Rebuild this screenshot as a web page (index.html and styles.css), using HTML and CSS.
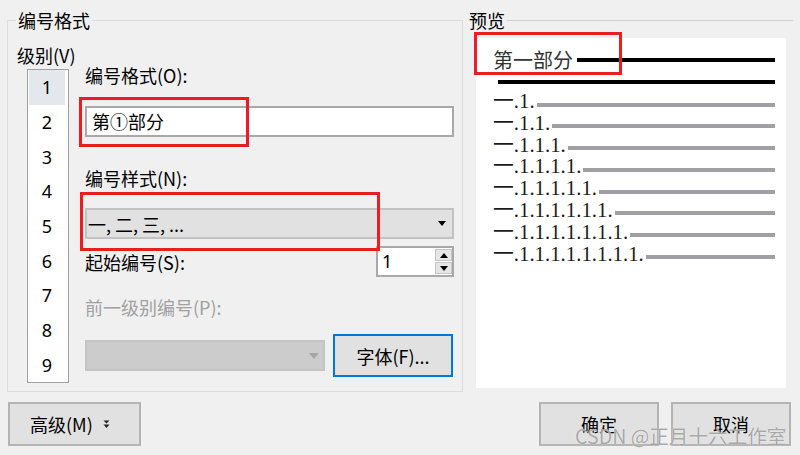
FILE: index.html
```html
<!DOCTYPE html>
<html lang="zh-CN">
<head>
  <meta charset="UTF-8">
  <meta name="viewport" content="width=device-width, initial-scale=1.0">
  <title>编号格式</title>
  <link rel="stylesheet" href="styles.css">
</head>
<body>

  <div class="dialog-top">
    <div class="group">
      <div class="group-title">编号格式</div>
      <div class="group-body">

        <div class="levels">
          <div class="levels-label">级别(V)</div>
          <ul class="level-list">
            <li class="selected">1</li>
            <li>2</li>
            <li>3</li>
            <li>4</li>
            <li>5</li>
            <li>6</li>
            <li>7</li>
            <li>8</li>
            <li>9</li>
          </ul>
        </div>

        <div class="fields">
          <div class="field-label first">编号格式(O):</div>
          <div class="text-input">第①部分</div>

          <div class="field-label">编号样式(N):</div>
          <div class="select">
            <span>一, 二, 三, ...</span>
            <span class="caret"></span>
          </div>

          <div class="row start-row">
            <span>起始编号(S):</span>
            <div class="spin">
              <span class="spin-value">1</span>
              <div class="spin-buttons">
                <span class="spin-btn"><span class="tri-up"></span></span>
                <span class="spin-btn"><span class="caret"></span></span>
              </div>
            </div>
          </div>

          <div class="field-label disabled">前一级别编号(P):</div>
          <div class="row font-row">
            <div class="select select-disabled">
              <span></span>
              <span class="caret"></span>
            </div>
            <button class="btn btn-font">字体(F)...</button>
          </div>
        </div>

      </div>
    </div>

    <div class="preview">
      <div class="preview-title">
        <span>预览</span>
        <span class="title-line"></span>
      </div>
      <div class="preview-box">
        <div class="preview-head">
          <span>第一部分</span>
          <span class="bar bar-black"></span>
        </div>
        <div class="bar bar-black bar-second"></div>
        <div class="preview-rows" id="rows"></div>
      </div>
    </div>
  </div>

  <div class="dialog-bottom">
    <button class="btn btn-advanced">
      <span>高级(M)</span>
      <svg class="adv-arrow" width="7" height="9" viewBox="0 0 7 9">
        <polygon points="0.5,0.5 6.5,0.5 3.5,3.5" fill="#222"/>
        <polygon points="0.5,4.5 6.5,4.5 3.5,8" fill="#222"/>
      </svg>
    </button>
    <button class="btn btn-ok">确定</button>
    <button class="btn btn-cancel">取消</button>
  </div>

  <!-- annotation boxes drawn over the dialog -->
  <div class="mark mark-format"></div>
  <div class="mark mark-style"></div>
  <div class="mark mark-preview"></div>

  <div class="watermark">CSDN @正月十六工作室</div>

  <script>
    // preview lines: 一.1. up to 一.1.1.1.1.1.1.1.1.
    const rows = document.getElementById('rows');
    for (let i = 1; i <= 8; i++) {
      const row = document.createElement('div');
      row.className = 'preview-row';
      const label = document.createElement('span');
      label.className = 'row-label';
      label.innerText = '一' + '.1'.repeat(i) + '.';
      const bar = document.createElement('span');
      bar.className = 'bar bar-gray';
      row.appendChild(label);
      row.appendChild(bar);
      rows.appendChild(row);
    }
  </script>

</body>
</html>
```

FILE: styles.css
```css
* {
  margin: 0;
  padding: 0;
  box-sizing: border-box;
}
body {
  width: 800px;
  height: 455px;
  overflow: hidden;
  position: relative;
  background-color: #f0f0f0;
  font-family: "Noto Sans CJK SC", "Noto Sans", sans-serif;
  font-size: 18px;
  color: #000;
}
ul {
  list-style: none;
}

.dialog-top {
  display: flex;
  height: 392px;
}

/* left group box */
.group {
  margin: 20px 0 0 7px;
  width: 456px;
  height: 372px;
  border: 1px solid #dcdcdc;
}
.group-title {
  width: fit-content;
  height: 20px;
  line-height: 20px;
  margin: -11px 0 0 8px;
  padding: 0 2px;
  background-color: #f0f0f0;
}
.group-body {
  display: flex;
  align-items: flex-start;
}

.levels {
  width: 77px;
  padding-left: 9px;
}
.levels-label {
  height: 20px;
  line-height: 20px;
  margin-top: 15px;
}
.level-list {
  margin: 4px 0 0 10px;
  width: 42px;
  height: 314px;
  border: 1px solid #a0a0a0;
  background-color: #fff;
  display: flex;
  flex-direction: column;
  padding: 0 3px 0 1px;
}
.level-list li {
  flex: 1;
  display: flex;
  align-items: center;
  justify-content: center;
  font-family: "Noto Sans", sans-serif;
  font-size: 18px;
}
.level-list .selected {
  background-color: #e4e7ec;
}

.fields {
  width: 369px;
}
.field-label {
  height: 20px;
  line-height: 20px;
  margin-top: 31px;
}
.field-label.first {
  margin-top: 35px;
}
.field-label.disabled {
  color: #a0a0a0;
  margin-top: 20px;
}
.text-input {
  margin-top: 21px;
  height: 31px;
  line-height: 27px;
  padding-left: 5px;
  background-color: #fff;
  border: 2px solid #a9a9a9;
}
.select {
  margin-top: 20px;
  height: 31px;
  display: flex;
  align-items: center;
  justify-content: space-between;
  padding: 0 6px 0 1px;
  background-color: #e1e1e1;
  border: 2px solid #c2c2c2;
}
.caret {
  width: 0;
  height: 0;
  border-left: 4px solid transparent;
  border-right: 4px solid transparent;
  border-top: 5px solid #000;
}
.tri-up {
  width: 0;
  height: 0;
  border-left: 4px solid transparent;
  border-right: 4px solid transparent;
  border-bottom: 5px solid #000;
}

.row {
  display: flex;
  align-items: center;
  justify-content: space-between;
}
.start-row {
  margin-top: 7px;
  height: 31px;
}
.spin {
  width: 78px;
  height: 31px;
  display: flex;
  justify-content: space-between;
  background-color: #fff;
  border: 2px solid #a9a9a9;
}
.spin-value {
  padding-left: 4px;
  line-height: 27px;
  font-family: "Noto Sans", sans-serif;
}
.spin-buttons {
  width: 17px;
  display: flex;
  flex-direction: column;
  gap: 1px;
  padding: 1px 0;
}
.spin-btn {
  flex: 1;
  display: flex;
  align-items: center;
  justify-content: center;
  background-color: #e6e6e6;
  border: 1px solid #c4c4c4;
}

.font-row {
  margin-top: 17px;
  height: 43px;
  justify-content: flex-start;
}
.select-disabled {
  margin-top: 0;
  width: 240px;
  background-color: #cccccc;
  border-color: #c4c4c4;
  padding-right: 4px;
}
.select-disabled .caret {
  border-left-width: 5px;
  border-right-width: 5px;
  border-top: 6px solid #a6a6a6;
}

.btn {
  font-family: "Noto Sans CJK SC", "Noto Sans", sans-serif;
  font-size: 18px;
  color: #000;
  background-color: #e1e1e1;
  border: 2px solid #b4b4b4;
  display: flex;
  align-items: center;
  justify-content: center;
}
.btn-font {
  margin-left: 8px;
  width: 120px;
  height: 43px;
  border-color: #0078d7;
}

/* preview */
.preview {
  flex: 1;
  display: flex;
  flex-direction: column;
}
.preview-title {
  margin-top: 10px;
  height: 20px;
  line-height: 20px;
  display: flex;
  align-items: center;
  padding: 0 7px 0 6px;
}
.title-line {
  flex: 1;
  height: 1px;
  margin-left: 2px;
  background-color: #d0d0d0;
}
.preview-box {
  margin: 8px 0 0 13px;
  width: 310px;
  height: 350px;
  background-color: #fff;
  padding: 10px 11px 0 17px;
}
.preview-head {
  display: flex;
  align-items: center;
  height: 24px;
  line-height: 24px;
  font-size: 20px;
  color: #333;
}
.bar {
  display: block;
  flex: 1;
  height: 4px;
}
.bar-black {
  background-color: #000;
}
.preview-head .bar {
  margin-left: 4px;
}
.bar-second {
  margin: 8px 0 0 5px;
}
.preview-rows {
  margin-top: 6px;
}
.preview-row {
  display: flex;
  align-items: flex-start;
  height: 21.8px;
}
.row-label {
  font-family: "Liberation Serif", "Noto Sans CJK SC", serif;
  font-size: 20.8px;
  line-height: 21.8px;
  color: #1a1a1a;
}
.bar-gray {
  margin: 12.5px 0 0 2px;
  background-color: #a0a0a4;
}

/* bottom buttons */
.dialog-bottom {
  display: flex;
  margin-top: 10px;
  height: 44px;
}
.btn-advanced {
  margin-left: 8px;
  width: 133px;
  justify-content: flex-start;
  padding-left: 20px;
}
.adv-arrow {
  margin-left: 10px;
}
.btn-ok {
  margin-left: auto;
  width: 120px;
}
.btn-cancel {
  margin: 0 9px 0 12px;
  width: 120px;
}

/* red annotation frames */
.mark {
  position: absolute;
  border: 3px solid #ec1c24;
}
.mark-format {
  left: 79px;
  top: 97px;
  width: 170px;
  height: 50px;
}
.mark-style {
  left: 80px;
  top: 192px;
  width: 300px;
  height: 59px;
}
.mark-preview {
  left: 474px;
  top: 32px;
  width: 148px;
  height: 43px;
}

.watermark {
  position: absolute;
  left: 575px;
  top: 425px;
  font-size: 19.6px;
  line-height: 22px;
  color: rgba(140, 140, 140, 0.75);
  text-shadow: 0 0 1px #fff;
  white-space: nowrap;
}
```
